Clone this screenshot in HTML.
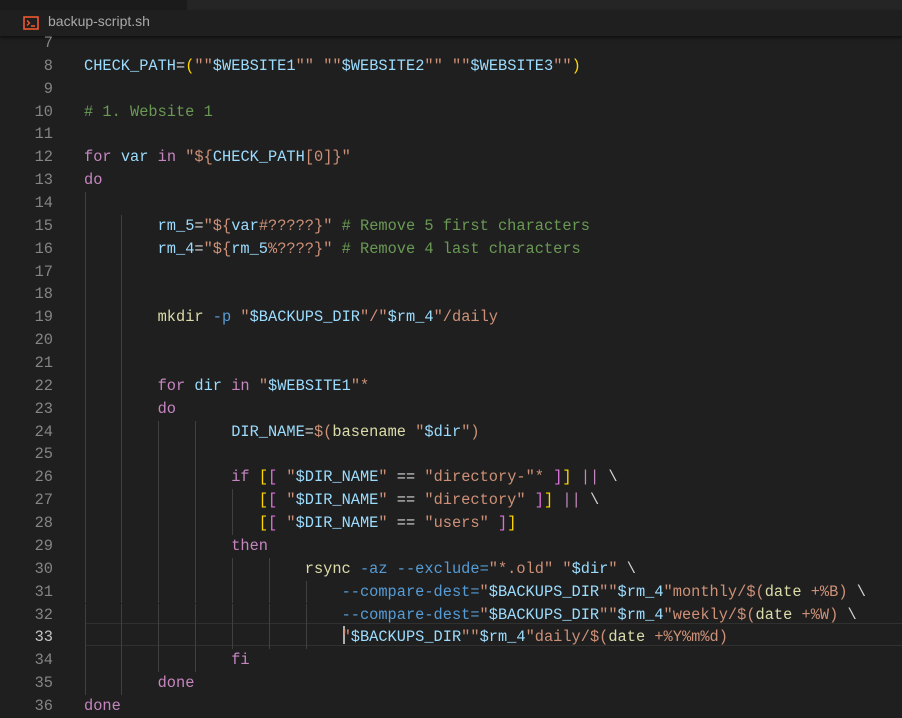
<!DOCTYPE html>
<html><head><meta charset="utf-8"><style>
body{margin:0;width:902px;height:716px;overflow:hidden;background:#1f1f1f;position:relative;font-family:"Liberation Mono",monospace;}
.top{position:absolute;left:0;top:0;width:902px;height:10px;background:#1b1b1b}
.top2{position:absolute;left:187px;top:0;width:715px;height:10px;background:#252526}
.tabbar{position:absolute;left:0;top:10px;width:902px;height:26px;background:#1f1f1f;box-shadow:0 2px 3px rgba(0,0,0,.5)}
.tt{position:absolute;left:48px;top:13px;font-family:"Liberation Sans",sans-serif;font-size:14px;color:#a9a9a9}
.ln{position:absolute;left:0;width:53px;text-align:right;font-size:15.33px;color:#858585;line-height:22.86px}
.cd{position:absolute;left:84px;font-size:15.33px;line-height:22.86px;white-space:pre;color:#d4d4d4}
.g{position:absolute;width:1px;background:#404040}
.v{color:#9cdcfe}.s{color:#ce9178}.c{color:#6a9955}.k{color:#c586c0}.f{color:#dcdcaa}.o{color:#569cd6}.y{color:#ffd700}.p{color:#da70d6}.b{color:#179fff}
</style></head><body>
<div class="top"></div><div class="top2"></div>
<div class="tabbar"></div>
<svg style="position:absolute;left:23px;top:16px" width="16" height="14" viewBox="0 0 16 14"><rect x="1" y="1" width="14" height="12" fill="none" stroke="#f0582e" stroke-width="1.6"/><path d="M4 4.5L6.5 7 4 9.5M8 10h4" fill="none" stroke="#f0582e" stroke-width="1.4"/></svg>
<div class="tt">backup-script.sh</div>
<div style="position:absolute;left:85px;top:623px;width:817px;height:21px;border-top:1px solid #303030;border-bottom:1px solid #303030"></div>
<div id="g"></div>
<div id="c"></div>
<script>
const L=[
[7,0,''],
[8,0,'<span class="v">CHECK_PATH</span>=<span class="y">(</span><span class="s">""</span><span class="v">$WEBSITE1</span><span class="s">""</span> <span class="s">""</span><span class="v">$WEBSITE2</span><span class="s">""</span> <span class="s">""</span><span class="v">$WEBSITE3</span><span class="s">""</span><span class="y">)</span>'],
[9,0,''],
[10,0,'<span class="c"># 1. Website 1</span>'],
[11,0,''],
[12,0,'<span class="k">for</span> <span class="v">var</span> <span class="k">in</span> <span class="s">"${</span><span class="v">CHECK_PATH</span><span class="s">[0]}"</span>'],
[13,0,'<span class="k">do</span>'],
[14,1,''],
[15,2,'        <span class="v">rm_5</span>=<span class="s">"${</span><span class="v">var</span><span class="s">#?????}"</span> <span class="c"># Remove 5 first characters</span>'],
[16,2,'        <span class="v">rm_4</span>=<span class="s">"${</span><span class="v">rm_5</span><span class="s">%????}"</span> <span class="c"># Remove 4 last characters</span>'],
[17,2,''],[18,2,''],
[19,2,'        <span class="f">mkdir</span> <span class="o">-p</span> <span class="s">"</span><span class="v">$BACKUPS_DIR</span><span class="s">"/"</span><span class="v">$rm_4</span><span class="s">"/daily</span>'],
[20,2,''],[21,2,''],
[22,2,'        <span class="k">for</span> <span class="v">dir</span> <span class="k">in</span> <span class="s">"</span><span class="v">$WEBSITE1</span><span class="s">"*</span>'],
[23,2,'        <span class="k">do</span>'],
[24,4,'                <span class="v">DIR_NAME</span>=<span class="s">$(</span><span class="f">basename</span> <span class="s">"</span><span class="v">$dir</span><span class="s">")</span>'],
[25,4,''],
[26,4,'                <span class="k">if</span> <span class="y">[</span><span class="p">[</span> <span class="s">"</span><span class="v">$DIR_NAME</span><span class="s">"</span> == <span class="s">"directory-"*</span> <span class="p">]</span><span class="y">]</span> <span class="k">||</span> \\'],
[27,5,'                   <span class="y">[</span><span class="p">[</span> <span class="s">"</span><span class="v">$DIR_NAME</span><span class="s">"</span> == <span class="s">"directory"</span> <span class="p">]</span><span class="y">]</span> <span class="k">||</span> \\'],
[28,5,'                   <span class="y">[</span><span class="p">[</span> <span class="s">"</span><span class="v">$DIR_NAME</span><span class="s">"</span> == <span class="s">"users"</span> <span class="p">]</span><span class="y">]</span>'],
[29,4,'                <span class="k">then</span>'],
[30,6,'                        <span class="f">rsync</span> <span class="o">-az</span> <span class="o">--exclude=</span><span class="s">"*.old"</span> <span class="s">"</span><span class="v">$dir</span><span class="s">"</span> \\'],
[31,7,'                            <span class="o">--compare-dest=</span><span class="s">"</span><span class="v">$BACKUPS_DIR</span><span class="s">""</span><span class="v">$rm_4</span><span class="s">"monthly/$(</span><span class="f">date</span> <span class="s">+%B)</span> \\'],
[32,7,'                            <span class="o">--compare-dest=</span><span class="s">"</span><span class="v">$BACKUPS_DIR</span><span class="s">""</span><span class="v">$rm_4</span><span class="s">"weekly/$(</span><span class="f">date</span> <span class="s">+%W)</span> \\'],
[33,7,'                            <span class="s">"</span><span class="v">$BACKUPS_DIR</span><span class="s">""</span><span class="v">$rm_4</span><span class="s">"daily/$(</span><span class="f">date</span> <span class="s">+%Y%m%d)</span>'],
[34,4,'                <span class="k">fi</span>'],
[35,2,'        <span class="k">done</span>'],
[36,0,'<span class="k">done</span>']
];
const GX=[85,121,158,195,232,269,306];
let h='',g='';
for(const [n,lv,t] of L){
 const y=32+(n-7)*22.86;
 h+=`<div class="ln" style="top:${y}px;${n==33?'color:#c6c6c6':''}">${n}</div><div class="cd" style="top:${y}px">${t}</div>`;
 for(let i=0;i<lv&&i<7;i++){let x=GX[i]; if(lv==5&&i==4)x=232; g+=`<div class="g" style="left:${x}px;top:${y}px;height:22.86px"></div>`;}
}
document.getElementById('c').innerHTML=h;document.getElementById('g').innerHTML=g+'<div class="g" style="left:343px;top:626px;height:18px;width:2px;background:#aeafad"></div>';
</script>
</body></html>
